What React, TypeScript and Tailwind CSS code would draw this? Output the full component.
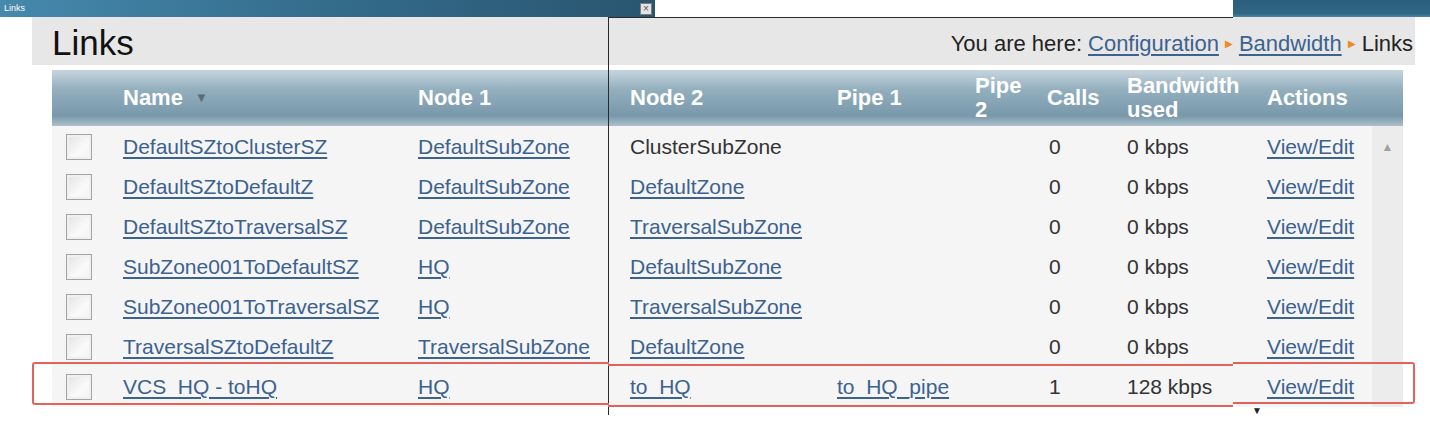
import React from "react";

// ── Data ──────────────────────────────────────────────────────────
type Cell = { text: string; link?: boolean };
type Row = {
  name: string;
  node1: string;
  node2: Cell;
  pipe1?: string;
  calls: string;
  bw: string;
};

const ROWS: Row[] = [
  { name: "DefaultSZtoClusterSZ", node1: "DefaultSubZone", node2: { text: "ClusterSubZone" }, calls: "0", bw: "0 kbps" },
  { name: "DefaultSZtoDefaultZ", node1: "DefaultSubZone", node2: { text: "DefaultZone", link: true }, calls: "0", bw: "0 kbps" },
  { name: "DefaultSZtoTraversalSZ", node1: "DefaultSubZone", node2: { text: "TraversalSubZone", link: true }, calls: "0", bw: "0 kbps" },
  { name: "SubZone001ToDefaultSZ", node1: "HQ", node2: { text: "DefaultSubZone", link: true }, calls: "0", bw: "0 kbps" },
  { name: "SubZone001ToTraversalSZ", node1: "HQ", node2: { text: "TraversalSubZone", link: true }, calls: "0", bw: "0 kbps" },
  { name: "TraversalSZtoDefaultZ", node1: "TraversalSubZone", node2: { text: "DefaultZone", link: true }, calls: "0", bw: "0 kbps" },
  { name: "VCS_HQ - toHQ", node1: "HQ", node2: { text: "to_HQ", link: true }, pipe1: "to_HQ_pipe", calls: "1", bw: "128 kbps" },
];

const COLS = "grid grid-cols-[71px_295px_212px_207px_138px_72px_80px_140px_105px]";

function Link({ children }: { children: React.ReactNode }) {
  return (
    <span className="text-[#3c6290] underline decoration-[#3c6290] underline-offset-[3px] whitespace-nowrap">
      {children}
    </span>
  );
}

function Checkbox() {
  return (
    <div className="ml-[14px] h-[26px] w-[26px] border border-[#a3a3a3] bg-[linear-gradient(135deg,#e2e2e2,#fafafa_60%,#f2f2f2)] shadow-[inset_0_0_0_2px_#f0f0f0]" />
  );
}

export default function App() {
  return (
    <div className="relative h-[423px] w-[1430px] overflow-hidden bg-white font-['Liberation_Sans',Arial,sans-serif] text-[#333]">
      {/* ── Title bars ─────────────────────────────── */}
      <div className="flex h-[17px]">
        <div className="flex w-[655px] items-center justify-between bg-[linear-gradient(to_right,#4689ad,#346c8c_50%,#29556f)] pl-[4px] pr-[3px]">
          <span className="text-[9px] leading-none text-white">Links</span>
          <span className="flex h-[12px] w-[12px] items-center justify-center border border-[#7d7d7d] bg-[#e4e4e4] text-[10px] leading-none text-[#555]">
            ×
          </span>
        </div>
        <div className="flex-1" />
        <div className="w-[197px] bg-[linear-gradient(to_bottom,#2c5f7c,#2f6785_80%,#4d87a3)]" />
      </div>

      {/* ── Page header ────────────────────────────── */}
      <div className="ml-[32px] flex h-[48px] w-[1383px] items-center justify-between bg-[#e7e7e7] pl-[20px] pr-[2px]">
        <h1 className="pt-[2px] text-[35px] leading-none text-[#111]">Links</h1>
        <div className="flex items-center gap-[6px] pt-[4px] text-[22px] text-[#222]">
          <span>You are here:</span>
          <Link>Configuration</Link>
          <span className="text-[10px] text-[#f08a24]">▶</span>
          <Link>Bandwidth</Link>
          <span className="text-[10px] text-[#f08a24]">▶</span>
          <span>Links</span>
        </div>
      </div>

      {/* ── Table ─────────────────────────────────── */}
      <div className="ml-[52px] mt-[5px] w-[1351px]">
        <div className="flex h-[56px] bg-[linear-gradient(to_bottom,#c6d5de_0%,#93afbe_35%,#7898aa_82%,#adc1cc_100%)] text-[22px] font-bold leading-[24px] text-white">
          <div className={`${COLS} items-center`}>
            <div />
            <div className="flex items-center gap-[12px]">
              Name <span className="text-[13px] text-[#5d6b75]">▼</span>
            </div>
            <div>Node 1</div>
            <div>Node 2</div>
            <div>Pipe 1</div>
            <div>
              Pipe
              <br />2
            </div>
            <div>Calls</div>
            <div>
              Bandwidth
              <br />
              used
            </div>
            <div>Actions</div>
          </div>
        </div>

        <div className="flex">
          <div className="w-[1320px] bg-[#f5f5f5] pt-px text-[21px]">
            {ROWS.map((r) => (
              <div key={r.name} className={`${COLS} h-[40px] items-center`}>
                <Checkbox />
                <div>
                  <Link>{r.name}</Link>
                </div>
                <div>
                  <Link>{r.node1}</Link>
                </div>
                <div>{r.node2.link ? <Link>{r.node2.text}</Link> : r.node2.text}</div>
                <div>{r.pipe1 && <Link>{r.pipe1}</Link>}</div>
                <div />
                <div className="pl-[2px]">{r.calls}</div>
                <div>{r.bw}</div>
                <div>
                  <Link>View/Edit</Link>
                </div>
              </div>
            ))}
          </div>
          {/* scroll column */}
          <div className="flex w-[31px] justify-center bg-[#ececec] pt-[15px]">
            <span className="text-[12px] leading-none text-[#a0a0a0]">▲</span>
          </div>
        </div>
      </div>

      {/* ── Overlays: window edge, highlight, arrow ─ */}
      <div className="absolute left-[608px] top-[17px] h-[398px] w-px bg-[#2a2a2a]" />
      <div className="absolute left-[608px] top-[17px] h-px w-[625px] bg-[#2a2a2a]" />

      <div className="absolute left-[32px] top-[362px] h-[43px] w-[577px] rounded-l-[3px] border-2 border-r-0 border-[#e4625c]" />
      <div className="absolute left-[608px] top-[364px] h-[43px] w-[625px] border-y-2 border-[#e4625c]" />
      <div className="absolute left-[1233px] top-[362px] h-[42px] w-[182px] rounded-r-[3px] border-2 border-l-0 border-[#e4625c]" />

      <span className="absolute left-[1252px] top-[406px] text-[10px] leading-none text-[#222]">▼</span>
    </div>
  );
}
